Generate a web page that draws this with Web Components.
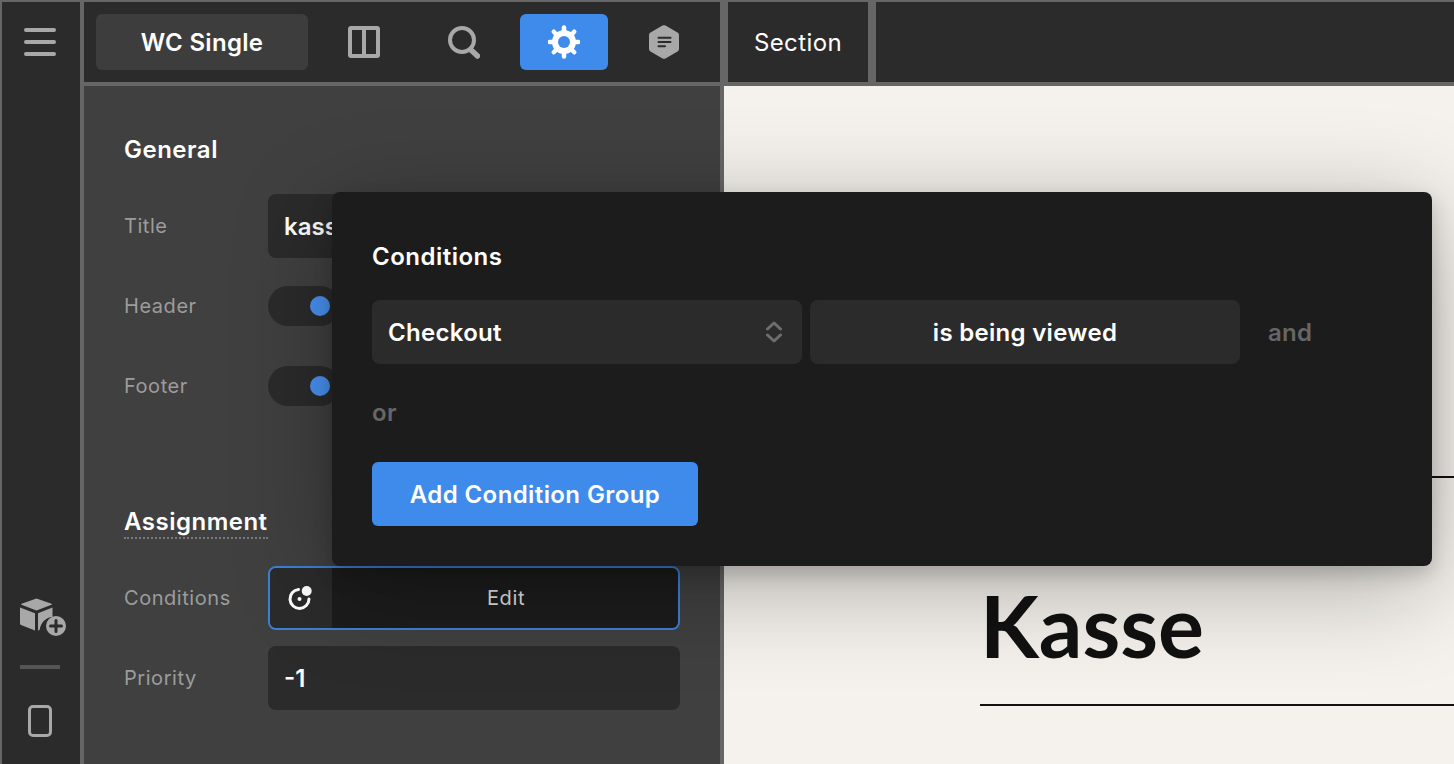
<!DOCTYPE html>
<html lang="en">
<head>
<meta charset="utf-8">
<title>WC Single</title>
<style>
  html, body { margin: 0; height: 100%; overflow: hidden; background: #666; }
  body { font-family: Inter, "Liberation Sans", sans-serif; }
</style>
</head>
<body>
<app-shell>
  <side-rail slot="rail"></side-rail>
  <top-bar slot="top"></top-bar>
  <settings-panel slot="panel"></settings-panel>
  <canvas-view slot="canvas"></canvas-view>
  <conditions-popover slot="overlay"></conditions-popover>
</app-shell>

<script>
class AppShell extends HTMLElement {
  constructor() {
    super();
    this.attachShadow({ mode: 'open' });
  }

  connectedCallback() {
    this.shadowRoot.innerHTML = `
      <style>
        :host {
          display: grid;
          grid-template-columns: 82px 1fr;
          grid-template-rows: 84px 1fr;
          box-sizing: border-box;
          width: 1454px;
          height: 764px;
          padding: 2px 0 0 2px;
          background: #666;
          overflow: hidden;
        }
        .rail { grid-row: 1 / 3; display: flex; min-height: 0; }
        .top { display: flex; min-width: 0; }
        .workspace {
          position: relative;
          display: grid;
          grid-template-columns: 640px 1fr;
          min-height: 0;
          overflow: hidden;
        }
      </style>
      <div class="rail"><slot name="rail"></slot></div>
      <div class="top"><slot name="top"></slot></div>
      <div class="workspace">
        <slot name="panel"></slot>
        <slot name="canvas"></slot>
        <slot name="overlay"></slot>
      </div>
    `;
  }
}

class SideRail extends HTMLElement {
  constructor() {
    super();
    this.attachShadow({ mode: 'open' });
  }

  connectedCallback() {
    this.shadowRoot.innerHTML = `
      <style>
        :host {
          display: flex;
          flex-direction: column;
          align-items: center;
          box-sizing: border-box;
          width: 82px;
          border-right: 4px solid #666;
          background: #2b2b2b;
          padding: 26px 2px 27px 0;
        }
        svg { display: block; }
        .spacer { flex: 1; }
        .rule { width: 40px; height: 4px; background: #555; margin: 29px 0 36px; }
      </style>
      <svg width="32" height="28" viewBox="0 0 32 28" fill="#a8a8a8">
        <rect y="0" width="32" height="4" rx="2"/>
        <rect y="12" width="32" height="4" rx="2"/>
        <rect y="24" width="32" height="4" rx="2"/>
      </svg>
      <div class="spacer"></div>
      <svg width="48" height="38" viewBox="0 0 48 38" style="margin-left:6px">
        <path fill="#a8a8a8" d="M17.5 0.5 L32.5 5.8 C33 6 33 6.6 32.5 6.8 L17.5 12.6 L2.5 6.8 C2 6.6 2 6 2.5 5.8 Z"/>
        <path fill="#a8a8a8" d="M1 9.5 L16 15.2 V32.5 L2 27 C1.4 26.7 1 26.2 1 25.5 Z"/>
        <path fill="#a8a8a8" d="M19 15.2 L33.5 9.5 V19 C27 19.5 22 24 20.5 32 L19 32.5 Z"/>
        <circle cx="37" cy="28" r="10" fill="#a8a8a8"/>
        <path d="M37 22.5 V33.5 M31.5 28 H42.5" stroke="#2b2b2b" stroke-width="3" stroke-linecap="round"/>
      </svg>
      <div class="rule"></div>
      <svg width="24" height="32" viewBox="0 0 24 32" fill="none">
        <rect x="1.5" y="1.5" width="21" height="29" rx="3.5" stroke="#a8a8a8" stroke-width="3"/>
      </svg>
    `;
  }
}

class TopBar extends HTMLElement {
  constructor() {
    super();
    this.attachShadow({ mode: 'open' });
  }

  connectedCallback() {
    this.shadowRoot.innerHTML = `
      <style>
        :host {
          display: flex;
          flex: 1;
          height: 84px;
          box-sizing: border-box;
          border-bottom: 4px solid #666;
          gap: 8px;
          background: #666;
          color: #fff;
          font-size: 24px;
        }
        .tools {
          width: 636px;
          box-sizing: border-box;
          background: #2b2b2b;
          padding: 12px;
          display: flex;
          gap: 12px;
        }
        .title {
          width: 212px;
          display: flex;
          align-items: center;
          justify-content: center;
          background: #3d3d3d;
          border-radius: 6px;
          font-weight: 600;
          letter-spacing: 0.3px;
        }
        .tool {
          width: 88px;
          display: flex;
          align-items: center;
          justify-content: center;
          border-radius: 6px;
        }
        .tool.active { background: #3e8bec; }
        .section {
          width: 140px;
          background: #2b2b2b;
          display: flex;
          align-items: center;
          justify-content: center;
          letter-spacing: 0.4px;
        }
        .rest { flex: 1; background: #2b2b2b; }
        svg { display: block; }
      </style>
      <div class="tools">
        <div class="title">WC Single</div>
        <div class="tool">
          <svg width="32" height="32" viewBox="0 0 32 32" fill="none" stroke="#a8a8a8" stroke-width="4">
            <rect x="2" y="2" width="28" height="28" rx="1"/>
            <path d="M16 2 V30"/>
          </svg>
        </div>
        <div class="tool">
          <svg width="32" height="34" viewBox="0 0 32 34" fill="none" stroke="#a8a8a8">
            <circle cx="14" cy="15" r="12" stroke-width="4"/>
            <path d="M23 25 L29.5 31" stroke-width="5.5" stroke-linecap="round"/>
          </svg>
        </div>
        <div class="tool active">
          <svg width="32" height="34" viewBox="0 0 32 34">
            <circle cx="16" cy="17" r="12" fill="#fff"/>
            <g stroke="#fff" stroke-width="4.5" stroke-linecap="round">
              <path d="M16 2.5 V31.5"/>
              <path d="M16 2.5 V31.5" transform="rotate(45 16 17)"/>
              <path d="M16 2.5 V31.5" transform="rotate(90 16 17)"/>
              <path d="M16 2.5 V31.5" transform="rotate(135 16 17)"/>
            </g>
            <circle cx="16" cy="17" r="6" fill="#3e8bec"/>
          </svg>
        </div>
        <div class="tool">
          <svg width="30" height="34" viewBox="0 0 30 34">
            <path fill="#a8a8a8" d="M13.5 0.6 Q15 0 16.5 0.6 L28.5 7.4 Q30 8.3 30 10 V24 Q30 25.7 28.5 26.6 L16.5 33.4 Q15 34 13.5 33.4 L1.5 26.6 Q0 25.7 0 24 V10 Q0 8.3 1.5 7.4 Z"/>
            <path d="M9.5 12.7 H21.5 M9.5 17 H21.5 M9.5 21.3 H16" stroke="#2b2b2b" stroke-width="2" stroke-linecap="round"/>
          </svg>
        </div>
      </div>
      <div class="section">Section</div>
      <div class="rest"></div>
    `;
  }
}

class FieldRow extends HTMLElement {
  constructor() {
    super();
    this.attachShadow({ mode: 'open' });
  }

  connectedCallback() {
    this.shadowRoot.innerHTML = `
      <style>
        :host {
          display: flex;
          align-items: center;
          height: 64px;
          margin-bottom: 16px;
        }
        label {
          width: 144px;
          flex: none;
          font-size: 20px;
          color: #9c9c9c;
          letter-spacing: 0.55px;
        }
        .control { width: 412px; display: flex; }
      </style>
      <label>${this.getAttribute('label')}</label>
      <div class="control"><slot></slot></div>
    `;
  }
}

class TextField extends HTMLElement {
  constructor() {
    super();
    this.attachShadow({ mode: 'open' });
  }

  connectedCallback() {
    this.shadowRoot.innerHTML = `
      <style>
        :host {
          display: flex;
          align-items: center;
          box-sizing: border-box;
          width: 100%;
          height: 64px;
          padding: 0 16px;
          background: #2b2b2b;
          border-radius: 8px;
          color: #fff;
          font-size: 24px;
          font-weight: 600;
        }
      </style>
      <slot></slot>
    `;
  }
}

class ToggleSwitch extends HTMLElement {
  constructor() {
    super();
    this.attachShadow({ mode: 'open' });
  }

  connectedCallback() {
    this.shadowRoot.innerHTML = `
      <style>
        :host {
          display: flex;
          align-items: center;
          justify-content: flex-end;
          box-sizing: border-box;
          width: 72px;
          height: 40px;
          padding-right: 10px;
          background: #2b2b2b;
          border-radius: 20px;
        }
        span { width: 20px; height: 20px; border-radius: 50%; background: #4a94f5; }
      </style>
      <span></span>
    `;
  }
}

class EditButton extends HTMLElement {
  constructor() {
    super();
    this.attachShadow({ mode: 'open' });
  }

  connectedCallback() {
    this.shadowRoot.innerHTML = `
      <style>
        :host {
          display: flex;
          box-sizing: border-box;
          width: 100%;
          height: 64px;
          border: 2px solid #3d80d8;
          border-radius: 8px;
          overflow: hidden;
          color: #dcdcdc;
          font-size: 20px;
        }
        .icon {
          width: 62px;
          flex: none;
          display: flex;
          align-items: center;
          justify-content: center;
          background: #2b2b2b;
          padding-right: 4px;
          box-sizing: border-box;
        }
        .label {
          flex: 1;
          display: flex;
          align-items: center;
          justify-content: center;
          background: #1c1c1c;
          letter-spacing: 0.6px;
          padding-left: 2px;
        }
        svg { display: block; }
      </style>
      <div class="icon">
        <svg width="26" height="26" viewBox="0 0 26 26" fill="none">
          <path d="M12.5 4.5 A9.5 9.5 0 1 0 23 14" stroke="#fff" stroke-width="3" stroke-linecap="round"/>
          <circle cx="13.5" cy="14" r="2" fill="#fff"/>
          <circle cx="20.7" cy="6" r="5" fill="#fff"/>
        </svg>
      </div>
      <div class="label">Edit</div>
    `;
  }
}

class SettingsPanel extends HTMLElement {
  constructor() {
    super();
    this.attachShadow({ mode: 'open' });
  }

  connectedCallback() {
    this.shadowRoot.innerHTML = `
      <style>
        :host {
          display: block;
          box-sizing: border-box;
          border-right: 4px solid #666;
          background: #404040;
          padding: 50px 40px 0;
          overflow: hidden;
          color: #fff;
        }
        h2 {
          margin: 0;
          font-size: 24px;
          line-height: 28px;
          font-weight: 600;
          letter-spacing: 0.5px;
        }
        .general { margin-bottom: 30px; }
        .assignment {
          display: inline-block;
          border-bottom: 2px dotted #7a7a7a;
          margin-top: 61px;
          margin-bottom: 27px;
          line-height: 30px;
        }
        .short { height: 40px; margin: 0 0 40px; }
        field-row.first { margin-bottom: 28px; }
      </style>
      <h2 class="general">General</h2>
      <field-row class="first" label="Title"><text-field>kasse</text-field></field-row>
      <field-row class="short" label="Header"><toggle-switch></toggle-switch></field-row>
      <field-row class="short" label="Footer"><toggle-switch></toggle-switch></field-row>
      <h2 class="assignment">Assignment</h2>
      <field-row label="Conditions"><edit-button></edit-button></field-row>
      <field-row label="Priority"><text-field>-1</text-field></field-row>
    `;
  }
}

class CanvasView extends HTMLElement {
  constructor() {
    super();
    this.attachShadow({ mode: 'open' });
  }

  connectedCallback() {
    this.shadowRoot.innerHTML = `
      <style>
        :host {
          display: block;
          background: #f5f2ed;
          padding: 390px 0 0 256px;
          overflow: hidden;
          color: #111;
        }
        .heading {
          border-top: 2px solid #111;
          border-bottom: 2px solid #111;
          height: 230px;
          box-sizing: border-box;
          display: flex;
          align-items: flex-end;
        }
        h1 {
          margin: 0 0 29px;
          font-family: Lato, "Liberation Sans", sans-serif;
          font-size: 86px;
          line-height: 100px;
          font-weight: 700;
        }
      </style>
      <div class="heading"><h1>Kasse</h1></div>
    `;
  }
}

class ConditionsPopover extends HTMLElement {
  constructor() {
    super();
    this.attachShadow({ mode: 'open' });
  }

  connectedCallback() {
    this.shadowRoot.innerHTML = `
      <style>
        :host {
          position: absolute;
          left: 248px;
          top: 106px;
          box-sizing: border-box;
          width: 1100px;
          height: 374px;
          padding: 49px 40px 40px;
          background: #1c1c1c;
          border-radius: 8px;
          box-shadow: 0 8px 20px rgba(0, 0, 0, 0.18), 0 20px 100px rgba(0, 0, 0, 0.3);
          color: #fff;
          font-size: 24px;
        }
        h3 {
          margin: 0 0 27px;
          font-size: 24px;
          line-height: 32px;
          font-weight: 600;
          letter-spacing: 0.5px;
        }
        .row { display: flex; align-items: center; gap: 8px; }
        .box {
          height: 64px;
          box-sizing: border-box;
          width: 430px;
          background: #2b2b2b;
          border-radius: 8px;
          display: flex;
          align-items: center;
          font-weight: 600;
          letter-spacing: 0.3px;
        }
        .select { padding: 0 19px 0 16px; justify-content: space-between; }
        .value { justify-content: center; }
        .muted { color: #666; font-weight: 600; letter-spacing: 0.3px; }
        .and { margin-left: 20px; }
        .or { height: 32px; line-height: 32px; margin: 33px 0 33px; }
        button {
          display: block;
          width: 326px;
          height: 64px;
          border: 0;
          border-radius: 6px;
          background: #3e8bec;
          color: #fff;
          font: 600 24px Inter, "Liberation Sans", sans-serif;
          letter-spacing: 0.4px;
        }
        svg { display: block; }
      </style>
      <h3>Conditions</h3>
      <div class="row">
        <div class="box select">
          <span>Checkout</span>
          <svg width="18" height="22" viewBox="0 0 18 22" fill="none" stroke="#6e6e6e" stroke-width="3" stroke-linecap="round" stroke-linejoin="round">
            <path d="M2.5 8 L9 2 L15.5 8"/>
            <path d="M2.5 14 L9 20 L15.5 14"/>
          </svg>
        </div>
        <div class="box value">is being viewed</div>
        <span class="muted and">and</span>
      </div>
      <div class="muted or">or</div>
      <button>Add Condition Group</button>
    `;
  }
}

customElements.define('app-shell', AppShell);
customElements.define('side-rail', SideRail);
customElements.define('top-bar', TopBar);
customElements.define('field-row', FieldRow);
customElements.define('text-field', TextField);
customElements.define('toggle-switch', ToggleSwitch);
customElements.define('edit-button', EditButton);
customElements.define('settings-panel', SettingsPanel);
customElements.define('canvas-view', CanvasView);
customElements.define('conditions-popover', ConditionsPopover);
</script>
</body>
</html>
